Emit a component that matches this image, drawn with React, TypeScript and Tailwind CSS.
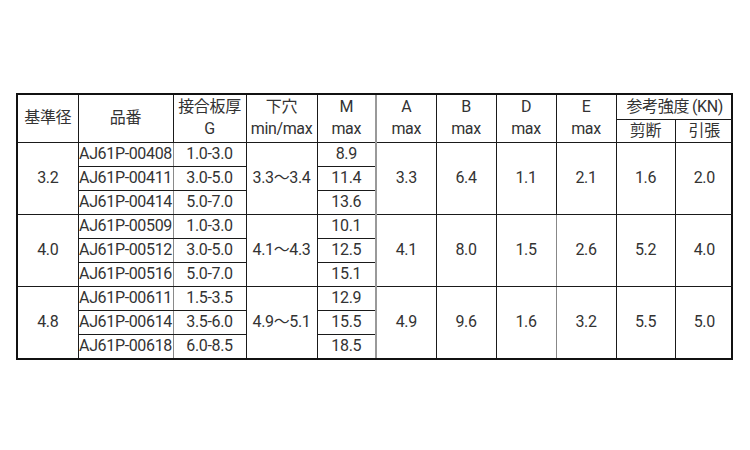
import React from 'react';

type Group = {
  dia: string;
  hole: string;
  a: string;
  b: string;
  d: string;
  e: string;
  shear: string;
  tensile: string;
  rows: { part: string; grip: string; m: string }[];
};

const groups: Group[] = [
  {
    dia: '3.2', hole: '3.3～3.4', a: '3.3', b: '6.4', d: '1.1', e: '2.1', shear: '1.6', tensile: '2.0',
    rows: [
      { part: 'AJ61P-00408', grip: '1.0-3.0', m: '8.9' },
      { part: 'AJ61P-00411', grip: '3.0-5.0', m: '11.4' },
      { part: 'AJ61P-00414', grip: '5.0-7.0', m: '13.6' },
    ],
  },
  {
    dia: '4.0', hole: '4.1～4.3', a: '4.1', b: '8.0', d: '1.5', e: '2.6', shear: '5.2', tensile: '4.0',
    rows: [
      { part: 'AJ61P-00509', grip: '1.0-3.0', m: '10.1' },
      { part: 'AJ61P-00512', grip: '3.0-5.0', m: '12.5' },
      { part: 'AJ61P-00516', grip: '5.0-7.0', m: '15.1' },
    ],
  },
  {
    dia: '4.8', hole: '4.9～5.1', a: '4.9', b: '9.6', d: '1.6', e: '3.2', shear: '5.5', tensile: '5.0',
    rows: [
      { part: 'AJ61P-00611', grip: '1.5-3.5', m: '12.9' },
      { part: 'AJ61P-00614', grip: '3.5-6.0', m: '15.5' },
      { part: 'AJ61P-00618', grip: '6.0-8.5', m: '18.5' },
    ],
  },
];

const cell = 'border border-[#1a1a1a] text-center align-middle p-0 font-normal whitespace-nowrap';

export default function App() {
  return (
    <div
      className="w-[750px] h-[450px] bg-white pt-[93px] pl-[16px] text-[#333] text-[16px] leading-[22px] tracking-[-0.35px]"
      style={{ fontFamily: 'Roboto, "Noto Sans CJK JP", sans-serif' }}
    >
      <div className="w-[717px] border-2 border-[#111]">
        <table className="w-full table-fixed border-collapse border-hidden">
          <colgroup>
            <col className="w-[60px]" />
            <col className="w-[95px]" />
            <col className="w-[73px]" />
            <col className="w-[71px]" />
            <col className="w-[59px]" />
            <col className="w-[60px]" />
            <col className="w-[60px]" />
            <col className="w-[60px]" />
            <col className="w-[60px]" />
            <col className="w-[59px]" />
            <col className="w-[58px]" />
          </colgroup>
          <thead>
            <tr className="h-[24px]">
              <th rowSpan={2} className={cell}>基準径</th>
              <th rowSpan={2} className={cell}>品番</th>
              <th rowSpan={2} className={cell}>接合板厚<br />G</th>
              <th rowSpan={2} className={cell}>下穴<br />min/max</th>
              <th rowSpan={2} className={`${cell} border-r-[#999] border-r-2`}>M<br />max</th>
              <th rowSpan={2} className={cell}>A<br />max</th>
              <th rowSpan={2} className={cell}>B<br />max</th>
              <th rowSpan={2} className={cell}>D<br />max</th>
              <th rowSpan={2} className={cell}>E<br />max</th>
              <th colSpan={2} className={cell}>参考強度&thinsp;(KN)</th>
            </tr>
            <tr className="h-[23px]">
              <th className={cell}>剪断</th>
              <th className={cell}>引張</th>
            </tr>
          </thead>
          <tbody>
            {groups.map((g, gi) =>
              g.rows.map((r, ri) => (
                <tr key={`${gi}-${ri}`} className="h-[24px]">
                  {ri === 0 && <td rowSpan={3} className={cell}>{g.dia}</td>}
                  <td className={`${cell} border-r-[#8a8a8a]`}>{r.part}</td>
                  <td className={cell}>{r.grip}</td>
                  {ri === 0 && <td rowSpan={3} className={cell}>{g.hole}</td>}
                  <td className={`${cell} border-r-[#999] border-r-2`}>{r.m}</td>
                  {ri === 0 && (
                    <>
                      <td rowSpan={3} className={cell}>{g.a}</td>
                      <td rowSpan={3} className={cell}>{g.b}</td>
                      <td rowSpan={3} className={`${cell} ${gi > 0 ? 'border-r-[#888]' : ''}`}>{g.d}</td>
                      <td rowSpan={3} className={cell}>{g.e}</td>
                      <td rowSpan={3} className={cell}>{g.shear}</td>
                      <td rowSpan={3} className={cell}>{g.tensile}</td>
                    </>
                  )}
                </tr>
              ))
            )}
          </tbody>
        </table>
      </div>
    </div>
  );
}
